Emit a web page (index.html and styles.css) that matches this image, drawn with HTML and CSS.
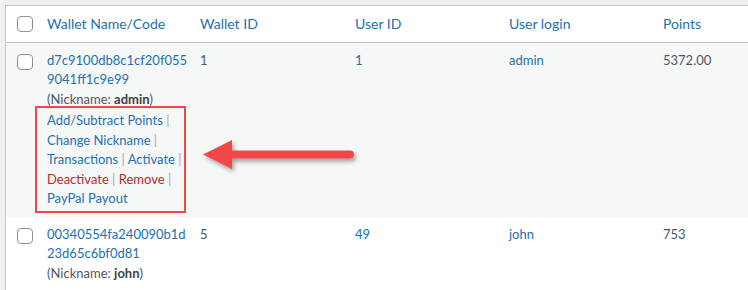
FILE: index.html
```html
<!DOCTYPE html>
<html>
<head>
<meta charset="utf-8">
<link rel="stylesheet" href="styles.css">
</head>
<body>
<div class="wrap">
  <table class="widefat">
    <colgroup>
      <col class="c-check">
      <col class="c-name">
      <col class="c-wid">
      <col class="c-uid">
      <col class="c-login">
      <col class="c-points">
    </colgroup>
    <thead>
      <tr>
        <td class="check-column"><span class="cb"></span></td>
        <th><a href="#">Wallet Name/Code</a></th>
        <th><a href="#">Wallet ID</a></th>
        <th><a href="#">User ID</a></th>
        <th><a href="#">User login</a></th>
        <th><a href="#">Points</a></th>
      </tr>
    </thead>
    <tbody>
      <tr class="alt">
        <th class="check-column row-check"><span class="cb"></span></th>
        <td>
          <a href="#" class="code">d7c9100db8c1cf20f055<br>9041ff1c9e99</a>
          <div>(Nickname: <strong>admin</strong>)</div>
          <div class="row-actions">
            <div><a href="#">Add/Subtract Points</a><span class="sep"> | </span></div>
            <div><a href="#">Change Nickname</a><span class="sep"> | </span></div>
            <div><a href="#">Transactions</a><span class="sep"> | </span><a href="#">Activate</a><span class="sep"> | </span></div>
            <div><a href="#" class="del">Deactivate</a><span class="sep"> | </span><a href="#" class="del">Remove</a><span class="sep"> | </span></div>
            <div><a href="#">PayPal Payout</a></div>
          </div>
        </td>
        <td>1</td>
        <td><a href="#">1</a></td>
        <td><a href="#">admin</a></td>
        <td>5372.00</td>
      </tr>
      <tr>
        <th class="check-column row-check"><span class="cb"></span></th>
        <td>
          <a href="#" class="code">00340554fa240090b1d<br>23d65c6bf0d81</a>
          <div>(Nickname: <strong>john</strong>)</div>
        </td>
        <td>5</td>
        <td><a href="#">49</a></td>
        <td><a href="#">john</a></td>
        <td>753</td>
      </tr>
    </tbody>
  </table>
  <svg class="arrow" width="170" height="50" viewBox="0 0 170 50">
    <defs>
      <filter id="sh" x="-10%" y="-30%" width="130%" height="180%">
        <feDropShadow dx="2" dy="3" stdDeviation="2" flood-color="#000" flood-opacity="0.35"/>
      </filter>
    </defs>
    <g filter="url(#sh)" fill="#f24646">
      <path d="M3 19.5 L32 5 L32 15.5 L150 15.5 A4 4 0 0 1 150 23.5 L32 23.5 L32 34 Z"/>
    </g>
  </svg>
</div>
</body>
</html>
```
FILE: styles.css
```css
html, body {
  margin: 0;
  padding: 0;
}
body {
  background: #f0f0f1;
  font-family: Lato, "Noto Sans", sans-serif;
  color: #50575e;
  overflow: hidden;
  width: 748px;
  height: 290px;
}
.wrap {
  position: relative;
  padding: 5px 0 0 5px;
}
a {
  color: #2271b1;
  text-decoration: none;
}
.widefat {
  table-layout: fixed;
  border-collapse: separate;
  border-spacing: 0;
  border: 1px solid #c3c4c7;
  border-right: 0;
  background: #fff;
  width: 743px;
}
.c-check { width: 31px; }
.c-name { width: 153px; }
.c-wid { width: 155px; }
.c-uid { width: 154px; }
.c-login { width: 154px; }
.c-points { width: 95px; }

.widefat thead th,
.widefat thead td {
  border-bottom: 1px solid #c3c4c7;
  font-size: 14px;
  line-height: 1.4em;
  font-weight: 400;
  text-align: left;
  padding: 8px 10px;
}
.widefat thead td.check-column {
  padding: 0 0 0 11px;
  vertical-align: middle;
}
.widefat tbody td {
  font-size: 13px;
  line-height: 1.5em;
  padding: 8px 10px;
  vertical-align: top;
}
.widefat tbody th.row-check {
  padding: 11px 0 0 11px;
  vertical-align: top;
  text-align: left;
}
.alt {
  background: #f6f7f7;
}
.cb {
  display: block;
  width: 14px;
  height: 14px;
  border: 1px solid #8c8f94;
  border-radius: 4px;
  background: #fff;
}
.code {
  display: block;
  white-space: nowrap;
}
strong {
  font-weight: 700;
  color: #3c434a;
}
.row-actions {
  position: relative;
  padding-top: 2px;
  white-space: nowrap;
}
.row-actions::after {
  content: "";
  position: absolute;
  left: -12px;
  right: -6px;
  top: -3px;
  bottom: -4px;
  border: 2px solid #f24646;
}
.sep {
  color: #a7aaad;
}
.del {
  color: #b32d2e;
}
.arrow {
  position: absolute;
  left: 200px;
  top: 135px;
}
```
